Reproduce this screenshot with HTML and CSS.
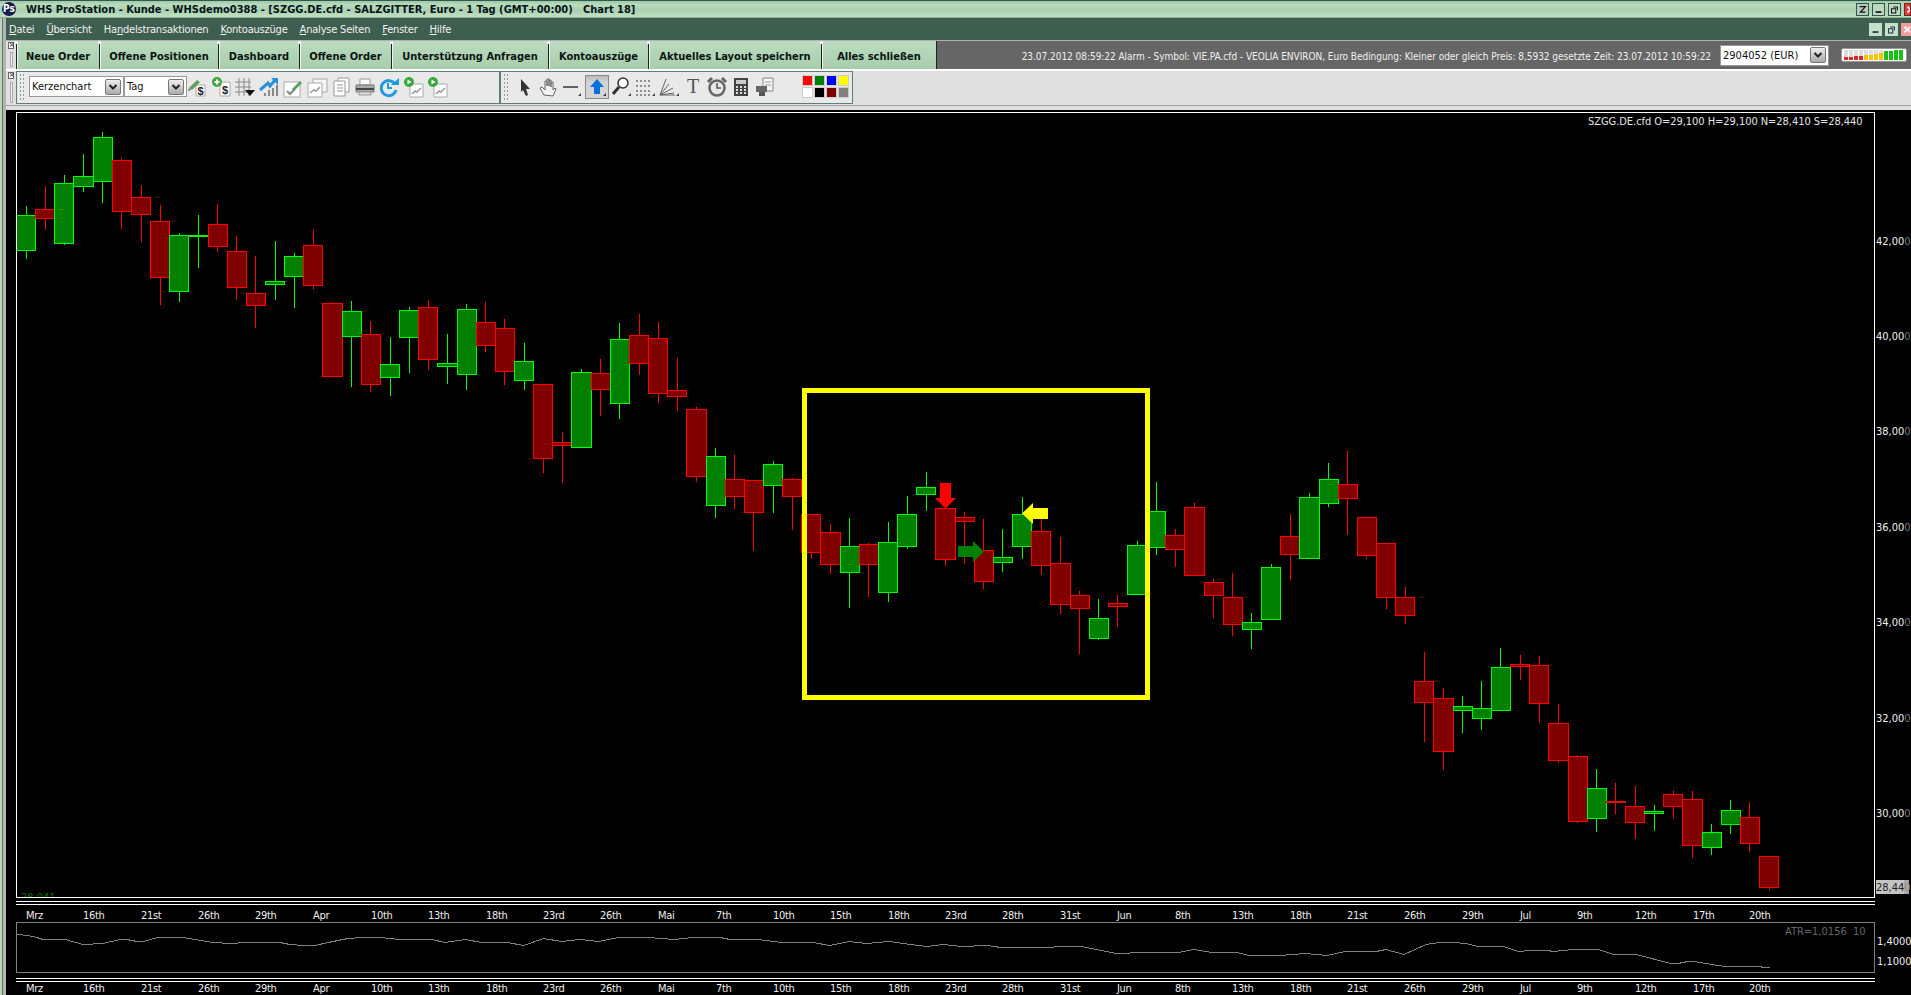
FILE: index.html
```html
<!DOCTYPE html>
<html lang="de">
<head>
<meta charset="utf-8">
<title>WHS ProStation</title>
<link rel="stylesheet" href="styles.css">
</head>
<body>
<header class="titlebar">
  <div class="ps-logo">Ps</div>
  <div class="title-text">WHS ProStation - Kunde - WHSdemo0388 - [SZGG.DE.cfd - SALZGITTER, Euro - 1 Tag (GMT+00:00)&nbsp;&nbsp; Chart 18]</div>
  <div class="win-btns">
    <span class="win-btn dark"><svg viewBox="0 0 13 13"><path d="M3 3h7L4 9.5h6" fill="none" stroke="#111" stroke-width="1.4"/></svg></span>
    <span class="win-btn"><svg viewBox="0 0 13 13"><path d="M3 9.5h7" stroke="#111" stroke-width="2"/></svg></span>
    <span class="win-btn"><svg viewBox="0 0 13 13"><path d="M5 3.5h5v4M3 5.500h5v5H3z" fill="none" stroke="#111" stroke-width="1.2"/></svg></span>
    <span class="win-btn red"><svg viewBox="0 0 13 13"><path d="M3 3l7 7M10 3l-7 7" stroke="#fff" stroke-width="2"/></svg></span>
  </div>
</header>
<div class="shell">
  <nav class="menubar">
    <span class="menu-item"><u>D</u>atei</span>
    <span class="menu-item"><u>Ü</u>bersicht</span>
    <span class="menu-item">Ha<u>n</u>delstransaktionen</span>
    <span class="menu-item"><u>K</u>ontoauszüge</span>
    <span class="menu-item"><u>A</u>nalyse Seiten</span>
    <span class="menu-item"><u>F</u>enster</span>
    <span class="menu-item"><u>H</u>ilfe</span>
    <div class="win-btns sub">
      <span class="win-btn light"><svg viewBox="0 0 13 13"><path d="M3 9.500h7" stroke="#234" stroke-width="2"/></svg></span>
      <span class="win-btn light"><svg viewBox="0 0 13 13"><path d="M5 3.500h5v4M3 5.500h5v5H3z" fill="none" stroke="#234" stroke-width="1.2"/></svg></span>
      <span class="win-btn pink"><svg viewBox="0 0 13 13"><path d="M3 3l7 7M10 3l-7 7" stroke="#fff" stroke-width="2"/></svg></span>
    </div>
  </nav>
  <div class="tabrow">
    <div class="dock-grip"><span class="dock-x">×</span><span class="dock-bar"></span></div>
    <div class="tab tab-1">Neue Order</div>
    <div class="tab tab-2">Offene Positionen</div>
    <div class="tab tab-3">Dashboard</div>
    <div class="tab tab-4">Offene Order</div>
    <div class="tab tab-5">Unterstützung Anfragen</div>
    <div class="tab tab-6">Kontoauszüge</div>
    <div class="tab tab-7">Aktuelles Layout speichern</div>
    <div class="tab tab-8">Alles schließen</div>
    <div class="alarm">23.07.2012 08:59:22 Alarm - Symbol: VIE.PA.cfd - VEOLIA ENVIRON, Euro Bedingung: Kleiner oder gleich Preis: 8,5932 gesetzte Zeit: 23.07.2012 10:59:22</div>
    <div class="combo account"><span class="combo-text">2904052 (EUR)</span><span class="combo-btn"><svg viewBox="0 0 10 10"><path d="M1.500 3L5 6.500 8.500 3" fill="none" stroke="#222" stroke-width="2"/></svg></span></div>
    <svg class="meter" viewBox="0 0 66 14">
      <rect x=".5" y=".5" width="65" height="13" rx="2" fill="#fff" stroke="#999"/>
      <g fill="#ddd"><rect x="3" y="2" width="4" height="10"/><rect x="8" y="2" width="4" height="10"/><rect x="13" y="2" width="4" height="10"/><rect x="18" y="2" width="4" height="10"/><rect x="23" y="2" width="4" height="10"/><rect x="28" y="2" width="4" height="10"/><rect x="33" y="2" width="4" height="10"/><rect x="38" y="2" width="4" height="10"/></g>
      <g fill="#d42a2a"><rect x="3" y="9" width="4" height="3"/><rect x="8" y="9" width="4" height="3"/><rect x="13" y="8" width="4" height="4"/><rect x="18" y="8" width="4" height="4"/></g>
      <g fill="#f5c400"><rect x="23" y="7" width="4" height="5"/><rect x="28" y="7" width="4" height="5"/><rect x="33" y="6" width="4" height="6"/><rect x="38" y="5" width="4" height="7"/></g>
      <g fill="#18c018"><rect x="43" y="3" width="4" height="9"/><rect x="48" y="3" width="4" height="9"/><rect x="53" y="2" width="4" height="10"/><rect x="58" y="2" width="4" height="10"/></g>
    </svg>
  </div>
  <div class="toolrow">
    <div class="dock-grip"><span class="dock-x">×</span><span class="dock-bar"></span></div>
    <div class="toolgroup first">
      <span class="dots"></span>
      <div class="combo kind"><span class="combo-text">Kerzenchart</span><span class="combo-btn"><svg viewBox="0 0 10 10"><path d="M1.500 3L5 6.500 8.500 3" fill="none" stroke="#222" stroke-width="2"/></svg></span></div>
      <div class="combo period"><span class="combo-text">Tag</span><span class="combo-btn"><svg viewBox="0 0 10 10"><path d="M1.500 3L5 6.500 8.500 3" fill="none" stroke="#222" stroke-width="2"/></svg></span></div>
      <div class="icons first">
        <svg class="ico" viewBox="0 0 22 22"><path d="M10 9h9v11h-9z" fill="#fff" stroke="#aaa"/><path d="M3 12l8-8 3 2-8 8z" fill="#5aa05a"/><path d="M3 12l-1 3 3-1z" fill="#666"/><text class="ico-dollar" x="11.500" y="18.500">$</text></svg>
        <svg class="ico" viewBox="0 0 22 22"><path d="M10 6h10v14H10z" fill="#fff" stroke="#aaa"/><circle cx="7" cy="6" r="5" fill="#3aa83a"/><path d="M4.500 6h5M7 3.500v5" stroke="#fff" stroke-width="2"/><text class="ico-dollar" x="12" y="18">$</text></svg>
        <svg class="ico" viewBox="0 0 22 22"><path d="M1 6h16M1 11h16M1 16h16M5 2v18M10 2v18M15 2v18" stroke="#888" fill="none"/><path d="M11 14h10l-5 6z" fill="#111"/></svg>
        <svg class="ico" viewBox="0 0 22 22"><path d="M7 20v-3M11 20v-6M15 20v-8M19 20V9" stroke="#888" stroke-width="2"/><path d="M2 14l8-7 2 3 5-6" fill="none" stroke="#2a8fd8" stroke-width="3"/><path d="M13 2h7v7z" fill="#2a8fd8"/></svg>
        <svg class="ico" viewBox="0 0 22 22"><path d="M2 6h16v15H2z" fill="#fff" stroke="#aaa"/><path d="M5 15l3 3 5-5" fill="none" stroke="#888" stroke-width="2"/><path d="M10 13l8-8 2 2-8 8z" fill="#5aa05a"/></svg>
        <svg class="ico" viewBox="0 0 22 22"><path d="M7 3h14v13H7z" fill="#f4f4f4" stroke="#aaa"/><path d="M2 7h14v14H2z" fill="#fff" stroke="#aaa"/><path d="M4 17l4-3 2 1 4-4" fill="none" stroke="#999" stroke-width="1.500"/></svg>
        <svg class="ico" viewBox="0 0 22 22"><path d="M8 2h11v14H8z" fill="#fff" stroke="#999"/><path d="M4 5h11v15H4z" fill="#fff" stroke="#999"/><path d="M7 9h6M7 12h6M7 15h6" stroke="#999"/></svg>
        <svg class="ico" viewBox="0 0 22 22"><path d="M6 3h10v6H6z" fill="#fff" stroke="#999"/><path d="M2 9h18v7H2z" fill="#aaa" stroke="#777"/><path d="M2 13h18" stroke="#444" stroke-width="2"/><path d="M5 16h12v3H5z" fill="#ddd" stroke="#999"/></svg>
        <svg class="ico" viewBox="0 0 22 22"><path d="M17 8a7.500 7.500 0 1 0 1 6" fill="none" stroke="#1e9be0" stroke-width="3"/><path d="M13 9h8V2z" fill="#1e9be0"/><path d="M10 7v5h4" fill="none" stroke="#1e9be0" stroke-width="2"/></svg>
        <svg class="ico" viewBox="0 0 22 22"><path d="M8 8h13v13H8z" fill="#fff" stroke="#aaa"/><path d="M10 18l3-3 2 1 4-4" fill="none" stroke="#999" stroke-width="1.500"/><circle cx="7" cy="6" r="5" fill="#3aa83a"/><path d="M5.500 3.500L9.500 6l-4 2.500z" fill="#fff"/></svg>
        <svg class="ico" viewBox="0 0 22 22"><path d="M8 8h13v13H8z" fill="#fff" stroke="#aaa"/><path d="M10 18l3-3 2 1 4-4" fill="none" stroke="#999" stroke-width="1.500"/><circle cx="7" cy="6" r="5" fill="#3aa83a"/><path d="M5.500 3.500L9.500 6l-4 2.500z" fill="#fff"/></svg>
      </div>
    </div>
    <div class="toolgroup second">
      <span class="dots"></span>
      <div class="icons">
        <svg class="ico" viewBox="0 0 22 22"><path d="M7 3l9 10-4 0 2 6-2 1-3-6-2 2z" fill="#333"/></svg>
        <svg class="ico" viewBox="0 0 22 22"><path d="M6 19l-4-7 2-1 3 3V5h2v5-7h2v7-6h2v7-5h2v8l2-2 1 1-3 7z" fill="#f2f2f2" stroke="#666"/></svg>
        <svg class="ico" viewBox="0 0 22 22"><path d="M1 11h15" stroke="#333" stroke-width="1.500"/><path d="M19 17v3h-3z" fill="#444"/></svg>
        <span class="ico-active"><svg class="ico" viewBox="0 0 22 22"><path d="M11 3l7 8h-4v7H8v-7H4z" fill="#0a6fe0"/><path d="M20 17v3h-3z" fill="#333"/></svg></span>
        <svg class="ico" viewBox="0 0 22 22"><circle cx="13" cy="7" r="5" fill="#fff" stroke="#333" stroke-width="1.500"/><path d="M9 11l-6 7" stroke="#333" stroke-width="3"/><path d="M21 17v3h-3z" fill="#444"/></svg>
        <svg class="ico" viewBox="0 0 22 22"><path d="M2 5h15M2 10h15M2 15h15M2 19h15" stroke="#333" stroke-dasharray="2 2"/><path d="M21 17v3h-3z" fill="#444"/></svg>
        <svg class="ico" viewBox="0 0 22 22"><path d="M2 19L8 3M2 19l9-11M2 19l13-7M2 19l14-2M2 19h15" stroke="#666" fill="none"/><path d="M21 17v3h-3z" fill="#444"/></svg>
        <span class="ico-t">T</span>
        <svg class="ico" viewBox="0 0 22 22"><circle cx="11" cy="12" r="7.500" fill="#e8e8e8" stroke="#666" stroke-width="2.500"/><path d="M11 7v5h4" fill="none" stroke="#555" stroke-width="1.500"/><path d="M2 6l4-4M20 6l-4-4" stroke="#666" stroke-width="3"/></svg>
        <svg class="ico" viewBox="0 0 22 22"><path d="M4 2h14v18H4z" fill="#444"/><path d="M6 4h10v4H6z" fill="#ccc"/><path d="M6 11h2M10 11h2M14 11h2M6 14h2M10 14h2M14 14h2M6 17h2M10 17h2M14 17h2" stroke="#ddd" stroke-width="2"/></svg>
        <svg class="ico" viewBox="0 0 22 22"><path d="M9 2h10v13H9z" fill="#f4f4f4" stroke="#888"/><path d="M11 6h6M11 9h6" stroke="#999"/><path d="M2 10h11v6H2z" fill="#666"/><path d="M5 16h6v4H5z" fill="#555"/></svg>
      </div>
      <div class="swatches">
        <span class="sw c-red"></span><span class="sw c-green"></span><span class="sw c-blue"></span><span class="sw c-yellow"></span>
        <span class="sw c-white"></span><span class="sw c-black"></span><span class="sw c-maroon"></span><span class="sw c-grey"></span>
      </div>
    </div>
  </div>
  <div class="strip"></div>
  <main class="chart">
    <svg class="chart-svg" viewBox="6 110 1905 885">
      <defs><clipPath id="plot"><rect x="16" y="112" width="1858" height="785"/></clipPath></defs>
      <g class="candles">
        <g class="up"><path d="M26.500 206V259"/><rect x="16.500" y="215.500" width="19" height="35"/></g>
        <g class="dn"><path d="M45.500 186V230"/><rect x="35.500" y="209.500" width="19" height="9"/></g>
        <g class="up"><path d="M64.500 175V245"/><rect x="54.500" y="183.500" width="19" height="60"/></g>
        <g class="up"><path d="M83.500 154V192"/><rect x="73.500" y="176.500" width="20" height="10"/></g>
        <g class="up"><path d="M102.500 132V203"/><rect x="93.500" y="137.500" width="19" height="44"/></g>
        <g class="dn"><path d="M121.500 158V229"/><rect x="112.500" y="160.500" width="19" height="51"/></g>
        <g class="dn"><path d="M141.500 185V242"/><rect x="131.500" y="197.500" width="19" height="17"/></g>
        <g class="dn"><path d="M160.500 205V305"/><rect x="150.500" y="221.500" width="19" height="56"/></g>
        <g class="up"><path d="M179.500 233V302"/><rect x="169.500" y="235.500" width="19" height="56"/></g>
        <g class="up"><path d="M198.500 215V268"/><rect x="188.500" y="235.500" width="20" height="1"/></g>
        <g class="dn"><path d="M217.500 204V252"/><rect x="208.500" y="224.500" width="19" height="22"/></g>
        <g class="dn"><path d="M236.500 236V300"/><rect x="227.500" y="251.500" width="19" height="36"/></g>
        <g class="dn"><path d="M255.500 256V328"/><rect x="246.500" y="293.500" width="19" height="12"/></g>
        <g class="up"><path d="M275.500 241V300"/><rect x="265.500" y="281.500" width="19" height="3"/></g>
        <g class="up"><path d="M294.500 253V308"/><rect x="284.500" y="256.500" width="19" height="20"/></g>
        <g class="dn"><path d="M313.500 229V289"/><rect x="303.500" y="245.500" width="19" height="40"/></g>
        <g class="dn"><path d="M332.500 302V377"/><rect x="322.500" y="303.500" width="20" height="73"/></g>
        <g class="up"><path d="M351.500 301V387"/><rect x="342.500" y="311.500" width="19" height="25"/></g>
        <g class="dn"><path d="M370.500 321V392"/><rect x="361.500" y="334.500" width="19" height="50"/></g>
        <g class="up"><path d="M390.500 337V396"/><rect x="380.500" y="364.500" width="19" height="13"/></g>
        <g class="up"><path d="M409.500 307V373"/><rect x="399.500" y="310.500" width="19" height="27"/></g>
        <g class="dn"><path d="M428.500 300V370"/><rect x="418.500" y="307.500" width="19" height="52"/></g>
        <g class="up"><path d="M447.500 334V384"/><rect x="437.500" y="363.500" width="20" height="3"/></g>
        <g class="up"><path d="M466.500 304V390"/><rect x="457.500" y="309.500" width="19" height="65"/></g>
        <g class="dn"><path d="M485.500 302V352"/><rect x="476.500" y="322.500" width="19" height="23"/></g>
        <g class="dn"><path d="M504.500 319V385"/><rect x="495.500" y="328.500" width="19" height="43"/></g>
        <g class="up"><path d="M524.500 343V390"/><rect x="514.500" y="361.500" width="19" height="19"/></g>
        <g class="dn"><path d="M543.500 384V473"/><rect x="533.500" y="384.500" width="19" height="74"/></g>
        <g class="dn"><path d="M562.500 432V483"/><rect x="552.500" y="442.500" width="19" height="3"/></g>
        <g class="up"><path d="M581.500 369V448"/><rect x="571.500" y="372.500" width="20" height="75"/></g>
        <g class="dn"><path d="M600.500 359V416"/><rect x="591.500" y="373.500" width="19" height="16"/></g>
        <g class="up"><path d="M619.500 323V419"/><rect x="610.500" y="339.500" width="19" height="64"/></g>
        <g class="dn"><path d="M639.500 314V375"/><rect x="629.500" y="335.500" width="19" height="28"/></g>
        <g class="dn"><path d="M658.500 322V403"/><rect x="648.500" y="338.500" width="19" height="55"/></g>
        <g class="dn"><path d="M677.500 358V411"/><rect x="667.500" y="390.500" width="19" height="6"/></g>
        <g class="dn"><path d="M696.500 407V482"/><rect x="686.500" y="409.500" width="20" height="67"/></g>
        <g class="up"><path d="M715.500 448V518"/><rect x="706.500" y="456.500" width="19" height="49"/></g>
        <g class="dn"><path d="M734.500 455V509"/><rect x="725.500" y="479.500" width="19" height="17"/></g>
        <g class="dn"><path d="M753.500 480V551"/><rect x="744.500" y="480.500" width="19" height="32"/></g>
        <g class="up"><path d="M773.500 461V513"/><rect x="763.500" y="464.500" width="19" height="21"/></g>
        <g class="dn"><path d="M792.500 478V530"/><rect x="782.500" y="479.500" width="19" height="17"/></g>
        <g class="dn"><path d="M811.500 514V559"/><rect x="801.500" y="514.500" width="19" height="38"/></g>
        <g class="dn"><path d="M830.500 524V574"/><rect x="820.500" y="532.500" width="20" height="32"/></g>
        <g class="up"><path d="M849.500 518V608"/><rect x="840.500" y="546.500" width="19" height="26"/></g>
        <g class="dn"><path d="M868.500 543V597"/><rect x="859.500" y="544.500" width="19" height="20"/></g>
        <g class="up"><path d="M888.500 522V602"/><rect x="878.500" y="542.500" width="19" height="50"/></g>
        <g class="up"><path d="M907.500 496V549"/><rect x="897.500" y="514.500" width="19" height="32"/></g>
        <g class="up"><path d="M926.500 472V511"/><rect x="916.500" y="487.500" width="19" height="7"/></g>
        <g class="dn"><path d="M945.500 508V566"/><rect x="935.500" y="508.500" width="20" height="51"/></g>
        <g class="dn"><path d="M964.500 512V564"/><rect x="955.500" y="517.500" width="19" height="4"/></g>
        <g class="dn"><path d="M983.500 519V589"/><rect x="974.500" y="550.500" width="19" height="31"/></g>
        <g class="up"><path d="M1002.500 529V572"/><rect x="993.500" y="557.500" width="19" height="5"/></g>
        <g class="up"><path d="M1022.500 497V559"/><rect x="1012.500" y="514.500" width="19" height="32"/></g>
        <g class="dn"><path d="M1041.500 518V575"/><rect x="1031.500" y="531.500" width="19" height="34"/></g>
        <g class="dn"><path d="M1060.500 537V614"/><rect x="1050.500" y="563.500" width="20" height="41"/></g>
        <g class="dn"><path d="M1079.500 591V654"/><rect x="1070.500" y="595.500" width="19" height="13"/></g>
        <g class="up"><path d="M1098.500 599V640"/><rect x="1089.500" y="618.500" width="19" height="20"/></g>
        <g class="dn"><path d="M1117.500 595V627"/><rect x="1108.500" y="603.500" width="19" height="3"/></g>
        <g class="up"><path d="M1137.500 541V595"/><rect x="1127.500" y="545.500" width="19" height="49"/></g>
        <g class="up"><path d="M1156.500 482V555"/><rect x="1146.500" y="511.500" width="19" height="36"/></g>
        <g class="dn"><path d="M1175.500 529V567"/><rect x="1165.500" y="535.500" width="19" height="14"/></g>
        <g class="dn"><path d="M1194.500 503V576"/><rect x="1184.500" y="507.500" width="20" height="68"/></g>
        <g class="dn"><path d="M1213.500 579V618"/><rect x="1204.500" y="582.500" width="19" height="13"/></g>
        <g class="dn"><path d="M1232.500 573V636"/><rect x="1223.500" y="597.500" width="19" height="27"/></g>
        <g class="up"><path d="M1251.500 613V649"/><rect x="1242.500" y="622.500" width="19" height="7"/></g>
        <g class="up"><path d="M1271.500 564V620"/><rect x="1261.500" y="567.500" width="19" height="52"/></g>
        <g class="dn"><path d="M1290.500 514V580"/><rect x="1280.500" y="536.500" width="19" height="18"/></g>
        <g class="up"><path d="M1309.500 493V559"/><rect x="1299.500" y="497.500" width="20" height="61"/></g>
        <g class="up"><path d="M1328.500 463V507"/><rect x="1319.500" y="479.500" width="19" height="24"/></g>
        <g class="dn"><path d="M1347.500 451V535"/><rect x="1338.500" y="484.500" width="19" height="14"/></g>
        <g class="dn"><path d="M1366.500 517V559"/><rect x="1357.500" y="517.500" width="19" height="38"/></g>
        <g class="dn"><path d="M1386.500 543V609"/><rect x="1376.500" y="543.500" width="19" height="54"/></g>
        <g class="dn"><path d="M1405.500 587V624"/><rect x="1395.500" y="597.500" width="19" height="18"/></g>
        <g class="dn"><path d="M1424.500 652V742"/><rect x="1414.500" y="681.500" width="19" height="21"/></g>
        <g class="dn"><path d="M1443.500 688V770"/><rect x="1433.500" y="698.500" width="20" height="53"/></g>
        <g class="up"><path d="M1462.500 696V733"/><rect x="1453.500" y="706.500" width="19" height="4"/></g>
        <g class="up"><path d="M1481.500 681V730"/><rect x="1472.500" y="708.500" width="19" height="10"/></g>
        <g class="up"><path d="M1500.500 648V711"/><rect x="1491.500" y="667.500" width="19" height="43"/></g>
        <g class="dn"><path d="M1520.500 655V680"/><rect x="1510.500" y="664.500" width="19" height="2"/></g>
        <g class="dn"><path d="M1539.500 656V723"/><rect x="1529.500" y="665.500" width="19" height="38"/></g>
        <g class="dn"><path d="M1558.500 704V763"/><rect x="1548.500" y="723.500" width="20" height="37"/></g>
        <g class="dn"><path d="M1577.500 755V823"/><rect x="1568.500" y="756.500" width="19" height="65"/></g>
        <g class="up"><path d="M1596.500 769V832"/><rect x="1587.500" y="788.500" width="19" height="30"/></g>
        <g class="dn"><path d="M1615.500 783V814"/><rect x="1606.500" y="801.500" width="19" height="1"/></g>
        <g class="dn"><path d="M1635.500 786V839"/><rect x="1625.500" y="806.500" width="19" height="16"/></g>
        <g class="up"><path d="M1654.500 805V831"/><rect x="1644.500" y="811.500" width="19" height="2"/></g>
        <g class="dn"><path d="M1673.500 791V819"/><rect x="1663.500" y="794.500" width="19" height="12"/></g>
        <g class="dn"><path d="M1692.500 791V858"/><rect x="1682.500" y="799.500" width="20" height="46"/></g>
        <g class="up"><path d="M1711.500 824V855"/><rect x="1702.500" y="832.500" width="19" height="15"/></g>
        <g class="up"><path d="M1730.500 800V834"/><rect x="1721.500" y="810.500" width="19" height="14"/></g>
        <g class="dn"><path d="M1749.500 802V852"/><rect x="1740.500" y="817.500" width="19" height="26"/></g>
        <g class="dn"><path d="M1769.500 856V890"/><rect x="1759.500" y="856.500" width="19" height="31"/></g>
      </g>
      <rect class="marker-box" x="804.500" y="390.500" width="343" height="307"/>
      <polygon class="arrow-red" points="940,483 951,483 951,498 956,498 945.500,508.500 935,498 940,498"/>
      <polygon class="arrow-green" points="958,546 973,546 973,541 984,551.500 973,562 973,557 958,557"/>
      <polygon class="arrow-yellow" points="1048,508 1033,508 1033,503 1022,513.500 1033,524 1033,519 1048,519"/>
      <g clip-path="url(#plot)"><text class="low-label" x="21" y="901">28,041</text></g>
      <rect class="frame" x="16.500" y="112.500" width="1858" height="785"/>
      <path class="rule" d="M16 901.500H1875M16 904.500H1875M16 978.500H1875M16 981.500H1875"/>
      <rect class="sub-frame" x="16.500" y="922.500" width="1858" height="50"/>
      <path class="atr-line" d="M17 934.500L28 935.500 37 937.500 43 939.500H65L83 944.500 103 943.500 120 939.500H127L137 941.500H143L158 937.500H183L213 942.500 230 943.500 247 942.500H280L290 944.500 303 945.500H315L328 942.500 348 938.500 362 937.500H380L400 939.500H432L445 942.500 465 939.500 482 942.500H507L524 945.500 543 938.500 562 941.500 580 939.500 599 941.500 618 937.500H649L674 939.500 693 937.500H720L730 939.500H758L782 942.500H813L830 945.500 849 941.500 866 943.500 889 941.500 903 943.500 927 946.500 943 944.500 962 946.500 987 945.500 1001 947.500H1050L1058 946.500H1082L1116 953.500 1144 952.500H1178L1194 949.500 1212 952.500H1237L1249 955.500H1280L1305 953.500 1327 955.500 1345 951.500H1376L1386 949.500 1404 954.500 1426 944.500 1439 942.500H1453L1466 943.500 1478 946.500H1503L1519 951.500 1529 950.500H1548L1553 951.500 1563 950.500 1573 949.500H1598L1614 954.500H1636L1671 963.500H1678L1688 961.500H1694L1718 965.500 1726 966.500H1759L1764 967.500H1770"/>
      <text class="quote" x="1588" y="125">SZGG.DE.cfd O=29,100 H=29,100 N=28,410 S=28,440</text>
      <text class="atr-label" x="1785" y="935">ATR=1,0156&#160;&#160;10</text>
      <g class="axis">
        <text x="1876" y="245">42,00<tspan class="dim">0</tspan></text>
        <text x="1876" y="340">40,00<tspan class="dim">0</tspan></text>
        <text x="1876" y="435">38,00<tspan class="dim">0</tspan></text>
        <text x="1876" y="531">36,00<tspan class="dim">0</tspan></text>
        <text x="1876" y="626">34,00<tspan class="dim">0</tspan></text>
        <text x="1876" y="722">32,00<tspan class="dim">0</tspan></text>
        <text x="1876" y="817">30,00<tspan class="dim">0</tspan></text>
        <text x="1877" y="945">1,4000</text>
        <text x="1877" y="965">1,1000</text>
      </g>
      <rect class="last-bg" x="1876" y="880" width="28" height="14"/>
      <rect class="last-bg-end" x="1904" y="880" width="5" height="14"/>
      <text class="last-label" x="1876" y="891">28,44<tspan class="last-dim">0</tspan></text>
      <g class="dates">
        <text x="26" y="919">Mrz</text><text x="83" y="919">16th</text><text x="141" y="919">21st</text><text x="198" y="919">26th</text><text x="255" y="919">29th</text><text x="313" y="919">Apr</text><text x="371" y="919">10th</text><text x="428" y="919">13th</text><text x="486" y="919">18th</text><text x="543" y="919">23rd</text><text x="600" y="919">26th</text><text x="658" y="919">Mai</text><text x="716" y="919">7th</text><text x="773" y="919">10th</text><text x="830" y="919">15th</text><text x="888" y="919">18th</text><text x="945" y="919">23rd</text><text x="1002" y="919">28th</text><text x="1060" y="919">31st</text><text x="1117" y="919">Jun</text><text x="1175" y="919">8th</text><text x="1232" y="919">13th</text><text x="1290" y="919">18th</text><text x="1347" y="919">21st</text><text x="1404" y="919">26th</text><text x="1462" y="919">29th</text><text x="1520" y="919">Jul</text><text x="1577" y="919">9th</text><text x="1635" y="919">12th</text><text x="1693" y="919">17th</text><text x="1749" y="919">20th</text>
        <text x="26" y="992">Mrz</text><text x="83" y="992">16th</text><text x="141" y="992">21st</text><text x="198" y="992">26th</text><text x="255" y="992">29th</text><text x="313" y="992">Apr</text><text x="371" y="992">10th</text><text x="428" y="992">13th</text><text x="486" y="992">18th</text><text x="543" y="992">23rd</text><text x="600" y="992">26th</text><text x="658" y="992">Mai</text><text x="716" y="992">7th</text><text x="773" y="992">10th</text><text x="830" y="992">15th</text><text x="888" y="992">18th</text><text x="945" y="992">23rd</text><text x="1002" y="992">28th</text><text x="1060" y="992">31st</text><text x="1117" y="992">Jun</text><text x="1175" y="992">8th</text><text x="1232" y="992">13th</text><text x="1290" y="992">18th</text><text x="1347" y="992">21st</text><text x="1404" y="992">26th</text><text x="1462" y="992">29th</text><text x="1520" y="992">Jul</text><text x="1577" y="992">9th</text><text x="1635" y="992">12th</text><text x="1693" y="992">17th</text><text x="1749" y="992">20th</text>
      </g>
    </svg>
  </main>
</div>
</body>
</html>
```

FILE: styles.css
```css
* { box-sizing: border-box; }
html, body { margin: 0; height: 995px; overflow: hidden; background: #000; }
body {
  display: flex;
  flex-direction: column;
  font-family: "DejaVu Sans Condensed", "DejaVu Sans", sans-serif;
  font-stretch: condensed;
  font-size: 11px;
}

/* Title bar */
.titlebar {
  height: 18px;
  flex: none;
  display: flex;
  align-items: center;
  background: linear-gradient(#9fc8a6 0, #bcdcbf 25%, #a9cfae 55%, #bcdcc0 90%);
  border-top: 1px solid #2f5a52;
  border-bottom: 1px solid #8fae92;
}
.ps-logo {
  width: 14px;
  height: 14px;
  margin-left: 2px;
  border-radius: 50%;
  background: #141c4c;
  color: #fff;
  font-size: 10px;
  font-weight: bold;
  line-height: 14px;
  text-align: center;
}
.title-text { margin-left: 10px; font-weight: bold; color: #06161a; white-space: nowrap; flex: 1; }
.win-btns { display: flex; gap: 3px; margin-left: auto; }
.win-btn { width: 13px; height: 13px; display: block; background: #bcd8c0; border: 1px solid #33564c; }
.win-btn svg { display: block; width: 11px; height: 11px; }
.win-btn.dark { background: #b4ccb8; }
.win-btn.red { background: #e23b3b; border-color: #7a2020; width: 7px; overflow: hidden; }
.win-btn.light { background: #c6dfca; border-color: #c6dfca; }
.win-btn.pink { background: #f09c9c; border-color: #f09c9c; width: 10px; overflow: hidden; }

/* Everything under the title bar hangs off a thin window edge */
.shell {
  flex: 1;
  min-height: 0;
  display: flex;
  flex-direction: column;
  padding-left: 6px;
  background: linear-gradient(90deg, #b9d6bd 0 2px, #5d7a68 2px 3px, #b4b4b4 3px 6px);
}

/* Menu */
.menubar {
  height: 23px;
  flex: none;
  display: flex;
  align-items: center;
  gap: 12px;
  padding-left: 3px;
  background: #3e5f4f;
  border-bottom: 1px solid #b0b0b0;
  color: #f2f2f2;
  font-size: 11px;
  letter-spacing: -0.2px;
}
.win-btns.sub { gap: 3px; }

/* Tab row */
.tabrow {
  height: 30px;
  flex: none;
  display: flex;
  align-items: stretch;
  background: #666;
  border-bottom: 2px solid #fff;
}
.dock-grip {
  width: 10px;
  flex: none;
  display: flex;
  flex-direction: column;
  align-items: center;
  gap: 3px;
  padding-top: 1px;
  background: #e0e0e0;
}
.dock-x {
  width: 6px;
  height: 7px;
  border: 1px solid #666;
  background: #fff;
  color: #000;
  font-size: 7px;
  line-height: 5px;
  text-align: center;
}
.dock-bar { width: 3px; flex: 1; margin-bottom: 2px; border: 1px solid #aaa; background: #eee; }
.tab {
  display: flex;
  align-items: center;
  justify-content: center;
  height: 28px;
  padding-top: 2px;
  background: linear-gradient(#bcdcc0, #a8cdac);
  border-left: 1px solid #222;
  box-shadow: inset 1px 0 0 #eef5ee;
  color: #0a1612;
  font-weight: bold;
  white-space: nowrap;
  position: relative;
}
.tab::before {
  content: "";
  position: absolute;
  left: -2px;
  top: 0;
  width: 3px;
  height: 3px;
  background: #fff;
  border-radius: 50%;
}
.tab-1 { width: 83px; }
.tab-2 { width: 119px; }
.tab-3 { width: 81px; }
.tab-4 { width: 92px; }
.tab-5 { width: 157px; }
.tab-6 { width: 100px; }
.tab-7 { width: 173px; }
.tab-8 { width: 116px; border-right: 1px solid #222; }
.alarm {
  margin-left: auto;
  padding-top: 2px;
  align-self: center;
  color: #f0f0f0;
  font-size: 10px;
  letter-spacing: -0.04px;
  white-space: nowrap;
}

/* Combos */
.combo {
  display: flex;
  align-items: center;
  height: 21px;
  padding: 0 2px 0 2px;
  background: #fff;
  border: 1px solid #999;
  color: #111;
  font-size: 11px;
}
.combo-text { flex: 1; white-space: nowrap; }
.combo-btn {
  width: 16px;
  height: 16px;
  display: flex;
  align-items: center;
  justify-content: center;
  background: linear-gradient(#eee, #aaa);
  border: 1px solid #777;
  border-radius: 2px;
}
.combo-btn svg { width: 10px; height: 10px; }
.account { width: 109px; margin-left: 9px; align-self: center; }
.account .combo-text { padding-top: 1px; }
.meter { width: 66px; height: 14px; margin: 0 4px 0 12px; align-self: center; flex: none; }

/* Tool row */
.toolrow {
  height: 35px;
  flex: none;
  display: flex;
  align-items: flex-start;
  background: #e0e0e0;
  border-bottom: 1px solid #a0a0a0;
}
.toolrow > .dock-grip { height: 34px; }
.toolgroup {
  height: 33px;
  display: flex;
  align-items: center;
  background: #e9e9e9;
  border: 1px solid #5f7f75;
  padding: 0 0 2px 2px;
}
.toolgroup.first { width: 484px; }
.toolgroup.second { width: 353px; }
.dots {
  width: 7px;
  height: 28px;
  flex: none;
  margin-right: 3px;
  background-image: radial-gradient(#999 1px, transparent 1px);
  background-size: 3px 4px;
}
.kind { width: 95px; }
.period { width: 63px; }
.icons { display: flex; align-items: center; }
.icons.first { margin-left: -2px; }
.ico { width: 22px; height: 22px; margin: 0 1px; flex: none; display: block; }
.ico-dollar { font-family: "Liberation Sans", sans-serif; font-size: 11px; font-weight: bold; fill: #222; }
.ico-active {
  display: flex;
  width: 24px;
  height: 24px;
  align-items: center;
  justify-content: center;
  background: linear-gradient(#bbb, #d4d4d4 30%);
  border: 1px solid #8a8a8a;
}
.ico-active .ico { margin: 0; }
.ico-t {
  width: 24px;
  text-align: center;
  flex: none;
  font-family: "Liberation Serif", serif;
  font-size: 20px;
  color: #555;
}
.swatches {
  display: grid;
  grid-template-columns: repeat(4, 11px);
  grid-auto-rows: 11px;
  gap: 1px;
  margin-left: 25px;
}
.sw { border: 1px solid #ccc; display: block; }
.c-red { background: #f00; }
.c-green { background: #008000; }
.c-blue { background: #00f; }
.c-yellow { background: #ff0; }
.c-white { background: #fff; }
.c-black { background: #000; }
.c-maroon { background: #800000; }
.c-grey { background: #808080; }

.strip { height: 4px; flex: none; background: #e0e0e0; }

/* Chart */
.chart { flex: 1; min-height: 0; background: #000; }
.chart-svg { display: block; width: 1905px; height: 885px; }
.chart-svg text { font-size: 11px; }
.candles { shape-rendering: crispEdges; }
.candles path { fill: none; stroke-width: 1; }
.up path, .up rect { stroke: #0f0; }
.up rect { fill: #008000; }
.dn path, .dn rect { stroke: #f00; }
.dn rect { fill: #800000; }
.marker-box { fill: none; stroke: #ff0; stroke-width: 5; shape-rendering: crispEdges; }
.arrow-red { fill: #f00; }
.arrow-green { fill: #008000; }
.arrow-yellow { fill: #ff0; }
.frame { fill: none; stroke: #fff; shape-rendering: crispEdges; }
.sub-frame { fill: none; stroke: #808080; shape-rendering: crispEdges; }
.rule { stroke: #fff; fill: none; shape-rendering: crispEdges; }
.atr-line { fill: none; stroke: #808080; shape-rendering: crispEdges; }
.chart-svg .low-label { fill: #007000; }
.chart-svg .quote { fill: #e4e4e4; letter-spacing: -0.05px; }
.chart-svg .atr-label { fill: #666; }
.axis text, .dates text { fill: #eee; }
.dates text { letter-spacing: -0.3px; }
.dim { fill: #777; }
.last-bg { fill: #c4c4c4; }
.last-bg-end { fill: #a8a8a8; }
.chart-svg .last-label { fill: #222; }
.last-dim { fill: #888; }
```
